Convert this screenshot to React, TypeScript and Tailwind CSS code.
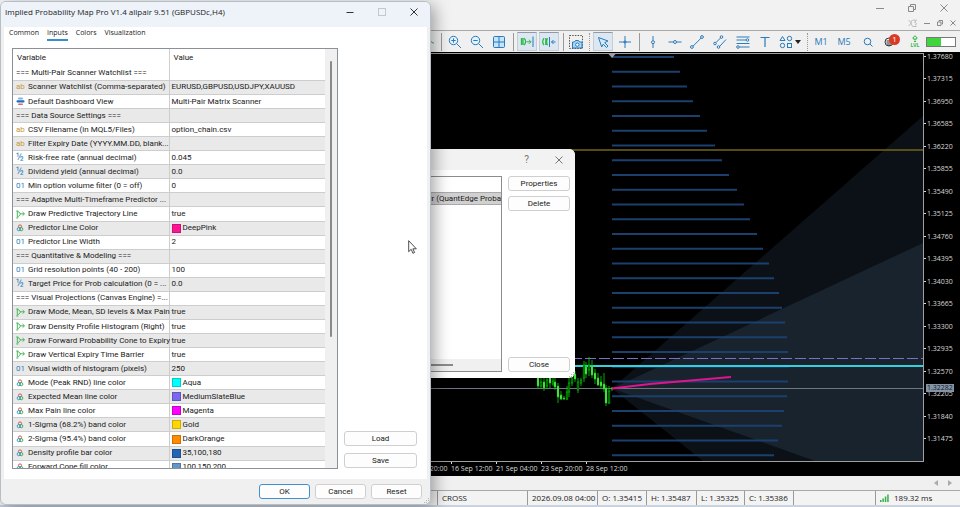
import type { ReactNode } from "react";

type Kind = "text" | "enum" | "half" | "int" | "bool" | "color";

interface InputRow {
  name: string;
  kind?: Kind;
  value?: string;
  swatch?: string;
}

const rows: InputRow[] = [
  { name: "=== Multi-Pair Scanner Watchlist ===" },
  { name: "Scanner Watchlist (Comma-separated)", kind: "text", value: "EURUSD,GBPUSD,USDJPY,XAUUSD" },
  { name: "Default Dashboard View", kind: "enum", value: "Multi-Pair Matrix Scanner" },
  { name: "=== Data Source Settings ===" },
  { name: "CSV Filename (in MQL5/Files)", kind: "text", value: "option_chain.csv" },
  { name: "Filter Expiry Date (YYYY.MM.DD, blank...", kind: "text", value: "" },
  { name: "Risk-free rate (annual decimal)", kind: "half", value: "0.045" },
  { name: "Dividend yield (annual decimal)", kind: "half", value: "0.0" },
  { name: "Min option volume filter (0 = off)", kind: "int", value: "0" },
  { name: "=== Adaptive Multi-Timeframe Predictor ..." },
  { name: "Draw Predictive Trajectory Line", kind: "bool", value: "true" },
  { name: "Predictor Line Color", kind: "color", value: "DeepPink", swatch: "#ff1493" },
  { name: "Predictor Line Width", kind: "int", value: "2" },
  { name: "=== Quantitative & Modeling ===" },
  { name: "Grid resolution points (40 - 200)", kind: "int", value: "100" },
  { name: "Target Price for Prob calculation (0 = ...", kind: "half", value: "0.0" },
  { name: "=== Visual Projections (Canvas Engine) =..." },
  { name: "Draw Mode, Mean, SD levels & Max Pain", kind: "bool", value: "true" },
  { name: "Draw Density Profile Histogram (Right)", kind: "bool", value: "true" },
  { name: "Draw Forward Probability Cone to Expiry", kind: "bool", value: "true" },
  { name: "Draw Vertical Expiry Time Barrier", kind: "bool", value: "true" },
  { name: "Visual width of histogram (pixels)", kind: "int", value: "250" },
  { name: "Mode (Peak RND) line color", kind: "color", value: "Aqua", swatch: "#00ffff" },
  { name: "Expected Mean line color", kind: "color", value: "MediumSlateBlue", swatch: "#7b68ee" },
  { name: "Max Pain line color", kind: "color", value: "Magenta", swatch: "#ff00ff" },
  { name: "1-Sigma (68.2%) band color", kind: "color", value: "Gold", swatch: "#ffd700" },
  { name: "2-Sigma (95.4%) band color", kind: "color", value: "DarkOrange", swatch: "#ff8c00" },
  { name: "Density profile bar color", kind: "color", value: "35,100,180", swatch: "#2364b4" },
  { name: "Forward Cone fill color", kind: "color", value: "100,150,200", swatch: "#6496c8" },
];

const prices = [
  "1.37680", "1.37315", "1.36950", "1.36585", "1.36220", "1.35855", "1.35490", "1.35125", "1.34760",
  "1.34395", "1.34030", "1.33665", "1.33300", "1.32935", "1.32570", "1.32205", "1.31840", "1.31475",
];

const times = ["11 Sep 20:00", "16 Sep 12:00", "21 Sep 04:00", "23 Sep 20:00", "28 Sep 12:00"];

// right end of each density bar, top to bottom
const density = [
  674, 680, 687, 693, 700, 707, 715, 722, 729, 737, 744, 750, 757, 763, 769, 774, 779, 782, 785, 787,
  788, 789, 788, 787, 784, 782, 778, 774,
];

// x, high, low, body top, body bottom, hollow
const candles: [number, number, number, number, number, boolean][] = [
  [538, 374, 388, 378, 386, false],
  [541, 377, 389, 382, 386, true],
  [544, 376, 391, 382, 388, false],
  [547, 374, 389, 380, 386, true],
  [550, 374, 388, 376, 383, false],
  [553, 378, 386, 381, 384, true],
  [555, 378, 390, 382, 387, false],
  [558, 383, 403, 386, 397, false],
  [561, 391, 400, 395, 399, false],
  [564, 396, 400, 398, 399, false],
  [567, 386, 400, 392, 399, true],
  [569, 378, 397, 383, 392, true],
  [572, 373, 386, 376, 383, true],
  [575, 371, 382, 374, 379, false],
  [578, 378, 393, 382, 390, true],
  [581, 378, 386, 380, 383, true],
  [584, 361, 382, 365, 378, true],
  [586, 362, 378, 367, 374, false],
  [589, 357, 376, 365, 370, true],
  [592, 360, 378, 366, 375, false],
  [595, 369, 384, 373, 379, false],
  [598, 373, 386, 378, 385, false],
  [601, 376, 389, 382, 386, false],
  [604, 373, 392, 384, 389, false],
  [606, 385, 406, 388, 403, false],
  [609, 386, 404, 391, 403, true],
  [612, 387, 391, 388, 389, false],
];

function KindIcon({ kind }: { kind: Kind }) {
  switch (kind) {
    case "text":
      return <span className="text-[8px] leading-none text-[#c8973a]">ab</span>;
    case "int":
      return <span className="text-[8px] leading-none text-[#2e7fb8]">01</span>;
    case "half":
      return <span className="text-[10px] leading-none text-[#2e7fb8]">½</span>;
    case "enum":
      return (
        <svg viewBox="0 0 9 9" className="size-[9px]">
          <rect x="2" y="0.5" width="5" height="2" rx="1" fill="#7fb4e6" />
          <rect x="0.5" y="3.2" width="8" height="2.4" rx="1" fill="#1d6cc0" />
          <rect x="2" y="6.6" width="5" height="1.4" rx="0.7" fill="#e06a6a" />
        </svg>
      );
    case "bool":
      return (
        <svg viewBox="0 0 9 9" className="size-[9px]" fill="none" stroke="#35b04a" strokeWidth="0.9">
          <path d="M0.3 1h2M1.300 1v6.500M0.300 8h2M2 1.500 4.200 3.200 4.200 4.500 2.300 6.800M4.200 3.800h4M6.600 2l1.900 1.800-1.900 1.800" />
        </svg>
      );
    case "color":
      return (
        <svg viewBox="0 0 9 9" className="size-2" fill="none" strokeWidth="1.1">
          <circle cx="4.5" cy="2.8" r="1.8" stroke="#d0574d" />
          <circle cx="3.1" cy="5.8" r="1.8" stroke="#3f97d6" />
          <circle cx="5.9" cy="5.8" r="1.8" stroke="#3aa854" />
        </svg>
      );
  }
}

function PushButton({ children, primary }: { children: ReactNode; primary?: boolean }) {
  return (
    <button
      type="button"
      className={
        primary
          ? "flex h-[15px] w-full items-center justify-center rounded-[3px] border border-[#3f8fd2] bg-[#fdfdfd] text-[8px]"
          : "flex h-[15px] w-full items-center justify-center rounded-[3px] border border-[#cfcfcf] bg-[#fdfdfd] text-[8px]"
      }
    >
      {children}
    </button>
  );
}

function Grip() {
  return (
    <svg viewBox="0 0 6 6" className="size-[6px]" fill="#b4b4b4">
      <path d="M4 0h1v1H4zM2 2h1v1H2zM4 2h1v1H4zM0 4h1v1H0zM2 4h1v1H2zM4 4h1v1H4z" />
    </svg>
  );
}

interface ToolProps {
  label: string;
  width?: "w-5" | "w-[22px]" | "w-6";
  pressed?: boolean;
  children: ReactNode;
}

function Tool({ label, width = "w-[22px]", pressed, children }: ToolProps) {
  return (
    <button
      type="button"
      aria-label={label}
      className={`flex h-5 shrink-0 items-center justify-center text-[#2b7bb9] ${width}`}
    >
      {pressed ? (
        <span className="flex h-[19px] w-5 items-center justify-center border border-[#c3cdd6] border-t-[#8f9aa5] bg-[#dce7f2]">
          {children}
        </span>
      ) : (
        children
      )}
    </button>
  );
}

function Icon({ children }: { children: ReactNode }) {
  return (
    <svg viewBox="0 0 14 14" className="size-[14px]" fill="none" stroke="currentColor" strokeWidth="1">
      {children}
    </svg>
  );
}

const Separator = () => (
  <span className="flex w-[6px] shrink-0 justify-center">
    <span className="h-[18px] w-px bg-[#999]" />
  </span>
);

const DottedSeparator = () => (
  <span className="flex w-[6px] shrink-0 justify-center">
    <span className="h-[18px] border-l border-dotted border-[#999]" />
  </span>
);

function Toolbar() {
  return (
    <div className="flex h-[22px] shrink-0 items-center justify-end overflow-hidden border-t border-[#a8a8a8] bg-[#f0f0f0] pr-1">
      <Tool label="Line chart">
        <Icon>
          <path d="M1 10 5 4l4 1 4 3h1" stroke="#35b04a" />
        </Icon>
      </Tool>
      <Separator />
      <Tool label="Zoom in">
        <Icon>
          <circle cx="5.5" cy="5.5" r="4.2" fill="#e3f1fb" />
          <path d="M8.6 8.6 13 13M3.3 5.5h4.4M5.5 3.3v4.4" />
        </Icon>
      </Tool>
      <Tool label="Zoom out">
        <Icon>
          <circle cx="5.5" cy="5.5" r="4.2" fill="#e3f1fb" />
          <path d="M8.6 8.6 13 13M3.3 5.5h4.4" />
        </Icon>
      </Tool>
      <Tool label="Tile windows">
        <Icon>
          <rect x="1.5" y="1.5" width="11" height="11" rx="1" fill="#c4e4fa" />
          <path d="M7 1.5v11M1.5 7h11" />
        </Icon>
      </Tool>
      <Separator />
      <Tool label="Auto scroll" pressed>
        <Icon>
          <g stroke="#2fb84a">
            <path d="M1.500 3v7M4.200 3.200c1.600 2 1.600 5 0 7M3 3v7" strokeWidth="1.300" />
            <path d="M6.500 6.800h4.500M9 4.800l2 2-2 2" />
          </g>
          <path d="M13 1.500v10.500" />
        </Icon>
      </Tool>
      <Tool label="Chart shift" pressed>
        <Icon>
          <g stroke="#2fb84a" strokeWidth="1.300">
            <path d="M2 3.200c-1.500 2-1.500 5 0 7M3.800 3v7M5.500 3.200c-1 2-1 5 0 7" />
          </g>
          <path d="M7.500 2v10M13.500 7h-4M11.500 5l-2 2 2 2" />
        </Icon>
      </Tool>
      <Separator />
      <Tool label="Screenshot" width="w-5">
        <Icon>
          <path d="M.5.500h13v13H.5z" stroke="#555" strokeDasharray="1.500 1.200" />
          <path d="M3.500 7h2l1-1.500h3L10.500 7h2.500v6H3.500z" fill="#a9d6f5" />
          <circle cx="8.300" cy="9.700" r="1.700" fill="#fff" />
        </Icon>
      </Tool>
      <DottedSeparator />
      <Tool label="Cursor" pressed>
        <Icon>
          <path d="M2.500 2.500 12 6 8.700 7.700 12 11l-1.500 1.500L7.200 9.200 5.700 12z" fill="#d3eafa" />
        </Icon>
      </Tool>
      <Tool label="Crosshair">
        <Icon>
          <path d="M7 1v4.500M7 8.500V13M1 7h4.500M8.500 7H13" />
          <path d="M7 5.500 8.500 7 7 8.500 5.500 7z" fill="#2b7bb9" />
        </Icon>
      </Tool>
      <Separator />
      <Tool label="Vertical line">
        <Icon>
          <path d="M7 1v4.500M7 9v4" />
          <circle cx="7" cy="7.200" r="1.500" />
        </Icon>
      </Tool>
      <Tool label="Horizontal line">
        <Icon>
          <path d="M.5 7h5M8.500 7h5" />
          <circle cx="7" cy="7" r="1.500" />
        </Icon>
      </Tool>
      <Tool label="Trendline">
        <Icon>
          <path d="M3 11.200 11.200 3" />
          <circle cx="1.900" cy="12" r="1.400" />
          <circle cx="12" cy="2" r="1.400" />
        </Icon>
      </Tool>
      <Tool label="Channel" width="w-6">
        <Icon>
          <path d="M3 7.500 7.500 3M6.500 11.500l6.500-7" />
          <circle cx="2" cy="8.500" r="1.300" />
          <circle cx="8.500" cy="2" r="1.300" />
          <circle cx="5.500" cy="12" r="1.300" />
        </Icon>
      </Tool>
      <Tool label="Fibonacci">
        <Icon>
          <path d="M.5 2h13M.5 5h9.500M.5 8.500h13M3.500 12h10" />
          <circle cx="11.500" cy="5" r="1.300" />
          <circle cx="2" cy="12" r="1.300" />
        </Icon>
      </Tool>
      <Tool label="Text">
        <Icon>
          <path d="M2.500 2.500h9M7 2.500V12" strokeWidth="1.200" />
        </Icon>
      </Tool>
      <button type="button" aria-label="Objects" className="flex w-7 shrink-0 items-center justify-center gap-[2px] text-[#2b7bb9]">
        <Icon>
          <path d="M1 5.500 3.500 1.500 6 5.500z" />
          <circle cx="10.500" cy="3.500" r="2.200" />
          <circle cx="3.500" cy="10.500" r="2.200" />
          <rect x="8.500" y="8.500" width="4" height="4" />
        </Icon>
        <svg viewBox="0 0 6 4" className="h-1 w-[6px]">
          <path d="M0 0h6L3 4z" fill="#222" />
        </svg>
      </button>
      <DottedSeparator />
      <button type="button" className="w-[22px] shrink-0 text-center text-[9px] text-[#2b7bb9]">M1</button>
      <button type="button" className="w-6 shrink-0 text-center text-[9px] text-[#2b7bb9]">M5</button>
      <Tool label="Search" width="w-6">
        <svg viewBox="0 0 10 10" className="size-[10px]" fill="none" stroke="currentColor">
          <circle cx="4.500" cy="4.500" r="3.300" />
          <path d="M7 7l2.500 2.500" />
        </svg>
      </Tool>
      <button type="button" aria-label="Notifications" className="relative flex w-6 shrink-0 items-center justify-center">
        <svg viewBox="0 0 10 10" className="mr-[6px] size-[10px]" fill="none" stroke="#333">
          <circle cx="5" cy="5" r="4" />
          <path d="M2.500 4h5M2.500 6h5M3 8h4" />
        </svg>
        <span className="absolute -top-[3px] right-1 flex size-[11px] items-center justify-center rounded-full bg-[#d93a24] text-[8px] leading-none text-white">
          1
        </span>
      </button>
      <button type="button" aria-label="Trading level" className="flex w-[22px] shrink-0 flex-col items-center text-[#2fb84a]">
        <svg viewBox="0 0 6 7" className="h-[7px] w-[6px]" fill="none" stroke="currentColor">
          <path d="M3 .7.700 3.200h1.300v1.600h2V3.200h1.300zM2 6.500h2" />
        </svg>
        <span className="text-[5px] leading-[6px] font-bold">LVL</span>
      </button>
      <span className="flex h-[10px] w-[30px] shrink-0 border border-[#777] bg-white">
        <span className="w-1/2 bg-[#3fd53f]" />
      </span>
    </div>
  );
}

function TitleControls() {
  return (
    <div className="flex h-[30px] shrink-0 flex-col items-end bg-[#f2f2f2] text-[#8a8a8a]">
      <div className="flex h-[15px] items-center gap-6 pr-3">
        <button type="button" aria-label="Minimize">
          <svg viewBox="0 0 8 8" className="size-2" fill="none" stroke="currentColor">
            <path d="M0 4.500h8" />
          </svg>
        </button>
        <button type="button" aria-label="Restore">
          <svg viewBox="0 0 8 8" className="size-2" fill="none" stroke="currentColor">
            <path d="M.5 2.500h5v5h-5zM2.500 2V.5h5v5H6" />
          </svg>
        </button>
        <button type="button" aria-label="Close terminal">
          <svg viewBox="0 0 8 8" className="size-2" fill="none" stroke="currentColor">
            <path d="M.5.500l7 7M7.500.500l-7 7" />
          </svg>
        </button>
      </div>
      <div className="flex h-[15px] items-center gap-[7px] pr-1">
        <svg viewBox="0 0 9 8" className="h-2 w-[9px]" fill="none" stroke="#bbb">
          <path d="M.5 1l3 3-3 3M4.500.800l-2 3.200 2 3.200M5 1.200h3.500L6.500 3.500C9 3.500 9 6 7 6M4.500 7.500h4" />
        </svg>
        <button type="button" aria-label="Minimize chart">
          <svg viewBox="0 0 6 6" className="size-[6px]" fill="none" stroke="currentColor">
            <path d="M0 3.500h6" />
          </svg>
        </button>
        <button type="button" aria-label="Restore chart">
          <svg viewBox="0 0 6 6" className="size-[6px]" fill="none" stroke="currentColor">
            <path d="M.5 2h3.500v3.500H.5zM2 1.500V.5h3.500V4H4.500" />
          </svg>
        </button>
        <button type="button" aria-label="Close chart">
          <svg viewBox="0 0 6 6" className="size-[6px]" fill="none" stroke="currentColor">
            <path d="M.5.500l5 5M5.500.500l-5 5" />
          </svg>
        </button>
      </div>
    </div>
  );
}

function Plot() {
  return (
    <svg viewBox="0 54 923 407" preserveAspectRatio="none" className="size-full">
      <path d="M612 388.500 923 116v345H703z" fill="#0c1117" />
      <path d="M612 388.500 923 243v218H815z" fill="#18232e" />
      <path d="M0 150h923" stroke="#75651a" strokeWidth="1.400" />
      {density.map((right, i) => (
        <rect key={i} x="612" y={56 + i * 14.75} width={right - 612} height="2" fill="#1b406e" />
      ))}
      <path d="M0 358.500h923" stroke="#7a70c8" strokeDasharray="11 3" strokeDashoffset="3" />
      <path d="M0 366h923" stroke="#35d0dc" strokeWidth="2" />
      <path d="M0 388.500h923" stroke="#6c7684" />
      {candles.map(([x, high, low, top, bottom, hollow]) => (
        <g key={x} stroke="#00d800">
          <path d={`M${x} ${high}V${low}`} strokeWidth="0.800" />
          <rect x={x - 0.8} y={top} width="1.600" height={bottom - top} strokeWidth="0.600" fill={hollow ? "#000" : "#b8ffb0"} />
        </g>
      ))}
      <path d="M612 388.500 650 384 731 377" stroke="#e0148c" strokeWidth="1.800" fill="none" />
      <path d="M608.500 54h7l-3.500 4z" fill="#9aa0a8" />
    </svg>
  );
}

function Chart() {
  return (
    <div className="flex min-h-0 flex-1 flex-col overflow-hidden bg-black pt-px text-[7px] text-[#d8d8d8]">
      <div className="flex min-h-0 flex-1">
        <div className="min-h-0 min-w-0 flex-1 border-t border-r border-b border-[#a0a0a0]">
          <Plot />
        </div>
        <div className="relative flex w-9 shrink-0 flex-col justify-between pb-5">
          {prices.map((price) => (
            <div key={price} className="flex h-[7px] items-center gap-px leading-[7px]">
              <span className="h-px w-[2px] bg-[#d8d8d8]" />
              {price}
            </div>
          ))}
          <span className="absolute top-[81%] left-[2px] h-2 bg-[#8494a8] px-px leading-2 text-[#101820]">1.32282</span>
        </div>
      </div>
      <div className="flex h-[14px] shrink-0 justify-end pr-[329px]">
        {times.map((time) => (
          <div key={time} className="flex w-[45px] shrink-0 flex-col">
            <span className="h-[2px] w-px bg-[#d8d8d8]" />
            <span className="leading-[9px] whitespace-nowrap">{time}</span>
          </div>
        ))}
      </div>
    </div>
  );
}

function StatusBar() {
  return (
    <footer className="shrink-0">
      <div className="flex h-[14px] items-center justify-end gap-[10px] bg-[#f0f0f0] pr-2 text-[#aaa]">
        <svg viewBox="0 0 4 6" className="h-[6px] w-1">
          <path d="M4 0v6L0 3z" fill="currentColor" />
        </svg>
        <svg viewBox="0 0 4 6" className="h-[6px] w-1">
          <path d="M0 0v6l4-3z" fill="currentColor" />
        </svg>
      </div>
      <div className="flex h-[15px] items-center justify-end border-t border-[#a8a8a8] bg-[#f3f3f3] text-[8px] leading-[14px] whitespace-nowrap text-[#222]">
        <span className="w-[90px] border-l border-[#999] pl-1">CROSS</span>
        <span className="w-[70px] border-l border-[#999] pl-1">2026.09.08 04:00</span>
        <span className="w-[49px] border-l border-[#999] pl-1">O: 1.35415</span>
        <span className="w-[50px] border-l border-[#999] pl-1">H: 1.35487</span>
        <span className="w-[48px] border-l border-[#999] pl-1">L: 1.35325</span>
        <span className="w-[49px] border-l border-[#999] pl-1">C: 1.35386</span>
        <span className="h-[14px] w-[82px] border-l border-[#999]" />
        <span className="flex w-[85px] items-center gap-[5px] border-l border-[#999] pl-1">
          <svg viewBox="0 0 9 8" className="h-2 w-[9px]" fill="#35b04a">
            <path d="M0 6h1.500v2H0zM2.400 4.500h1.500V8H2.400zM4.800 2.500h1.500V8H4.800zM7.200.500h1.500V8H7.200z" />
          </svg>
          189.32 ms
        </span>
      </div>
      <div className="h-[2px] bg-[#c9d3de]" />
    </footer>
  );
}

function IndicatorsDialog() {
  return (
    <section className="absolute top-[149px] left-[300px] flex h-[229px] w-[275px] flex-col overflow-hidden rounded-md bg-white font-['Roboto','Liberation_Sans',sans-serif]">
      <header className="flex h-[21px] shrink-0 items-center justify-end gap-[26px] bg-[#f2f2f2] pr-3 text-[#777]">
        <button type="button" className="text-[10px]">?</button>
        <button type="button" aria-label="Close list">
          <svg viewBox="0 0 8 8" className="size-2" fill="none" stroke="currentColor">
            <path d="M.5.500l7 7M7.500.500l-7 7" />
          </svg>
        </button>
      </header>
      <div className="flex min-h-0 flex-1 gap-[6px] py-[6px] pr-[5px] pl-2">
        <div className="flex min-w-0 flex-1 flex-col border border-[#8c8c8c] text-[8px]">
          <div className="h-[15px]" />
          <div className="h-[13px] truncate border-y border-[#aaa] bg-[#d0d0d0] text-right leading-[11px]">
            allpair (QuantEdge Proba
          </div>
          <div className="mt-auto flex h-3 items-center bg-[#f0f0f0]">
            <span className="h-[2px] w-[144px] bg-[#8a8a8a]" />
          </div>
        </div>
        <div className="flex w-[62px] shrink-0 flex-col gap-[5px]">
          <PushButton>Properties</PushButton>
          <PushButton>Delete</PushButton>
          <div className="mt-auto">
            <PushButton>Close</PushButton>
          </div>
        </div>
      </div>
      <div className="absolute right-0 bottom-0">
        <Grip />
      </div>
    </section>
  );
}

function InputsDialog() {
  return (
    <section className="absolute top-px left-0 flex h-[504px] w-[431px] flex-col overflow-hidden rounded-md border border-[#b8bec6] bg-[#f0f0f0] font-['Roboto','Liberation_Sans',sans-serif] shadow-[4px_4px_16px_rgba(0,0,0,0.35)]">
      <header className="flex h-[25px] shrink-0 items-center justify-between bg-[#edf3f9] pr-3 pl-1">
        <h1 className="pb-[5px] font-['Open_Sans','Noto_Sans',sans-serif] text-[8px] text-[#222]">
          Implied Probability Map Pro V1.4 allpair 9.51 (GBPUSDc,H4)
        </h1>
        <div className="flex gap-6 pb-[6px] text-[#333]">
          <button type="button" aria-label="Minimize dialog">
            <svg viewBox="0 0 8 8" className="size-2" fill="none" stroke="currentColor">
              <path d="M.5 4.500h7" />
            </svg>
          </button>
          <button type="button" aria-label="Maximize dialog" disabled>
            <svg viewBox="0 0 8 8" className="size-2" fill="none" stroke="#c4c8cc">
              <rect x=".5" y=".5" width="7" height="7" />
            </svg>
          </button>
          <button type="button" aria-label="Close dialog">
            <svg viewBox="0 0 8 8" className="size-2" fill="none" stroke="currentColor">
              <path d="M.5.500l7 7M7.500.500l-7 7" />
            </svg>
          </button>
        </div>
      </header>
      <div className="mx-[3px] flex min-h-0 flex-1 flex-col bg-white pr-[10px] pb-[10px] pl-2">
        <nav className="-ml-[3px] flex h-[21px] shrink-0 gap-2 font-['Open_Sans','Noto_Sans',sans-serif] text-[7px]">
          <button type="button" className="flex h-[14px] items-center border-b-2 border-transparent">Common</button>
          <button type="button" className="flex h-[14px] items-center border-b-2 border-[#3b8dc6]">Inputs</button>
          <button type="button" className="flex h-[14px] items-center border-b-2 border-transparent">Colors</button>
          <button type="button" className="flex h-[14px] items-center border-b-2 border-transparent">Visualization</button>
        </nav>
        <div className="flex min-h-0 flex-1 gap-[6px]">
          <div className="flex min-w-0 flex-1 overflow-hidden border border-[#8c9097]">
            <div className="min-w-0 flex-1">
              <table className="h-[426px] w-full table-fixed border-collapse text-[8px] leading-[10px]">
                <thead>
                  <tr className="h-[18px] text-left">
                    <th className="w-1/2 border-r border-[#d0d0d0] pl-1 font-normal">Variable</th>
                    <th className="w-1/2 pl-1 font-normal">Value</th>
                  </tr>
                </thead>
                <tbody>
                  {rows.map((row) => (
                    <tr key={row.name} className="border-b border-[#cdcdcd] even:bg-[#e9e9e9]">
                      <td className="border-r border-[#cdcdcd] p-0 pl-[3px]">
                        <div className="flex items-center whitespace-nowrap">
                          {row.kind && (
                            <span className="flex h-[10px] w-3 shrink-0 items-center">
                              <KindIcon kind={row.kind} />
                            </span>
                          )}
                          {row.name}
                        </div>
                      </td>
                      <td className="p-0 pl-[2px]">
                        <div className="flex items-center gap-[2px] whitespace-nowrap">
                          {row.swatch && (
                            <span className="size-[9px] border border-black/20" style={{ backgroundColor: row.swatch }} />
                          )}
                          {row.value}
                        </div>
                      </td>
                    </tr>
                  ))}
                </tbody>
              </table>
            </div>
            <div className="flex w-3 shrink-0 justify-center bg-[#f0f0f0] pt-3">
              <span className="h-[276px] w-[2px] rounded-full bg-[#8a8a8a]" />
            </div>
          </div>
          <div className="flex w-[73px] shrink-0 flex-col justify-end gap-[7px] pb-px">
            <PushButton>Load</PushButton>
            <PushButton>Save</PushButton>
          </div>
        </div>
      </div>
      <footer className="flex h-[25px] shrink-0 justify-end gap-[5px] pt-[5px] pr-2">
        <div className="w-[51px]">
          <PushButton primary>OK</PushButton>
        </div>
        <div className="w-[51px]">
          <PushButton>Cancel</PushButton>
        </div>
        <div className="w-[51px]">
          <PushButton>Reset</PushButton>
        </div>
      </footer>
      <div className="absolute right-0 bottom-0">
        <Grip />
      </div>
      {/* mouse pointer */}
      <svg viewBox="0 0 9 14" className="absolute top-[238px] left-[407px] h-[14px] w-[9px]">
        <path d="M.7.700v11l2.500-2.400 1.700 4 1.700-.8-1.700-3.700h3.400z" fill="#fff" stroke="#222" strokeWidth="0.800" />
      </svg>
    </section>
  );
}

export default function App() {
  return (
    <main className="relative flex h-screen flex-col overflow-hidden bg-[#f0f0f0] font-['Open_Sans','Noto_Sans',sans-serif] text-[#1a1a1a]">
      <TitleControls />
      <Toolbar />
      <Chart />
      <StatusBar />
      <IndicatorsDialog />
      <InputsDialog />
    </main>
  );
}
